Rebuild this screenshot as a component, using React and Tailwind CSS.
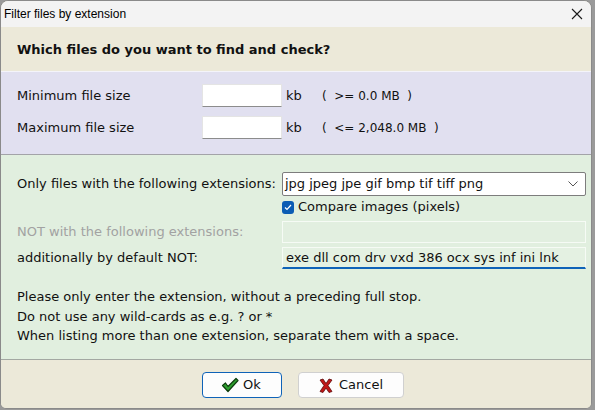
import React from "react";

const Check = () => (
  <svg width="18" height="16" viewBox="0 0 18 16">
    <path d="M1.5 8.5 L4.5 6 L7 9.5 L15 1.5 L17 3.5 L7 14.5 Z" fill="#2ea02e" stroke="#0d3d0d" strokeWidth="1.2" strokeLinejoin="round" />
  </svg>
);

const Cross = () => (
  <svg width="14" height="15" viewBox="0 0 14 15">
    <path d="M1 2 L4 1 L7 5.5 L10 1 L13 2 L9 7.5 L13 13.5 L10 14.5 L7 10 L4 14.5 L1 13.5 L5 7.5 Z" fill="#c01818" stroke="#5a0808" strokeWidth="0.8" strokeLinejoin="round" />
  </svg>
);

export default function App() {
  const body = "font-['DejaVu_Sans',sans-serif] text-[13px] text-[#111]";
  return (
    <div className="w-[595px] h-[410px] bg-[#9a9a9a] overflow-hidden">
      <div className="w-[592px] h-[409px] rounded-t-lg rounded-b-md border border-[#8a8a8a] bg-[#ece9d9] overflow-hidden flex flex-col">
        {/* Title bar */}
        <div className="h-[26px] shrink-0 bg-[#f3f3f3] flex items-center justify-between pl-[3px] pr-[7px]">
          <span className="font-['Liberation_Sans',sans-serif] text-[12px] text-black">Filter files by extension</span>
          <svg width="12" height="12" viewBox="0 0 12 12" className="mr-[1px]">
            <path d="M1 1 L11 11 M11 1 L1 11" stroke="#1a1a1a" strokeWidth="1.1" />
          </svg>
        </div>
        {/* Header */}
        <div className="h-[44px] shrink-0 bg-[#ece9d9] flex items-center pl-[16px] pt-[2px]">
          <span className="font-['DejaVu_Sans',sans-serif] font-bold text-[13px] text-[#111]">Which files do you want to find and check?</span>
        </div>
        {/* Lavender */}
        <div className={`shrink-0 h-[84px] bg-[#e1e0f0] border-t border-[#f4f4fa] border-b border-b-[#a3a3a8] pl-[16px] pt-[12px] flex flex-col gap-[9px] ${body}`}>
          <div className="flex items-center h-[23px]">
            <span className="w-[185px]">Minimum file size</span>
            <div className="w-[80px] h-[23px] bg-white border border-[#e4e4e4] border-b-[#8c8c8c]" />
            <span className="ml-[4px] w-[36px]">kb</span>
            <span className="text-[12px] whitespace-pre">{"(  >= 0.0 MB  )"}</span>
          </div>
          <div className="flex items-center h-[23px]">
            <span className="w-[185px]">Maximum file size</span>
            <div className="w-[80px] h-[23px] bg-white border border-[#e4e4e4] border-b-[#8c8c8c]" />
            <span className="ml-[4px] w-[36px]">kb</span>
            <span className="text-[12px] whitespace-pre">{"(  <= 2,048.0 MB  )"}</span>
          </div>
        </div>
        {/* Green */}
        <div className={`shrink-0 h-[205px] bg-[#e1efdf] border-b border-[#a3a8a2] pl-[16px] pt-[17px] ${body}`}>
          <div className="flex items-center h-[24px]">
            <span className="w-[265px] whitespace-nowrap">Only files with the following extensions:</span>
            <div className="w-[304px] h-[24px] bg-white border border-[#7d7d7d] rounded-[2px] flex items-center justify-between pl-[2px] pr-[7px]">
              <span>jpg jpeg jpe gif bmp tif tiff png</span>
              <svg width="10" height="6" viewBox="0 0 10 6">
                <path d="M0.5 0.5 L5 5 L9.5 0.5" fill="none" stroke="#555" strokeWidth="1" />
              </svg>
            </div>
          </div>
          <div className="flex items-center h-[16px] mt-[3px] ml-[265px] gap-[4px]">
            <div className="w-[12px] h-[13px] rounded-[3px] bg-[#0b5cb4] flex items-center justify-center">
              <svg width="8" height="7" viewBox="0 0 8 7">
                <path d="M1 3.5 L3 5.5 L7 1" fill="none" stroke="white" strokeWidth="1.2" />
              </svg>
            </div>
            <span>Compare images (pixels)</span>
          </div>
          <div className="flex items-center h-[22px] mt-[6px]">
            <span className="w-[265px] text-[#a2a2a2] whitespace-nowrap">NOT with the following extensions:</span>
            <div className="w-[304px] h-[22px] bg-[#e2efe0] border border-[#f6fbf5]" />
          </div>
          <div className="flex items-center h-[22px] mt-[4px]">
            <span className="w-[265px]">additionally by default NOT:</span>
            <div className="w-[304px] h-[22px] bg-[#e4f1e2] border border-[#f6fbf5] border-b-2 border-b-[#0f63b8] flex items-center pl-[3px] pt-[1px]">
              <span>exe dll com drv vxd 386 ocx sys inf ini lnk</span>
            </div>
          </div>
          <div className="mt-[18px] flex flex-col leading-[19.5px]">
            <span>Please only enter the extension, without a preceding full stop.</span>
            <span>Do not use any wild-cards as e.g. ? or *</span>
            <span>When listing more than one extension, separate them with a space.</span>
          </div>
        </div>
        {/* Footer */}
        <div className={`flex-1 bg-[#ece9d9] flex items-start pt-[12px] pl-[201px] gap-[16px] ${body}`}>
          <button className="w-[80px] h-[26px] bg-[#fdfdfd] border border-[#0f63b8] rounded-[4px] flex items-center justify-center gap-[4px] pr-[2px]">
            <Check />
            <span>Ok</span>
          </button>
          <button className="w-[106px] h-[26px] bg-[#fdfdfd] border border-[#d0d0d0] rounded-[4px] flex items-center justify-center gap-[6px]">
            <Cross />
            <span>Cancel</span>
          </button>
        </div>
      </div>
    </div>
  );
}
